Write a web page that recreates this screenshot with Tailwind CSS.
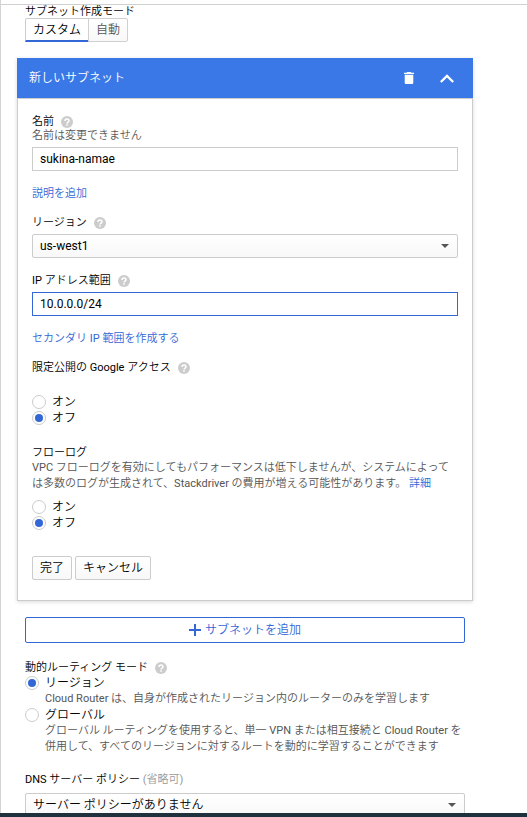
<!DOCTYPE html>
<html lang="ja">
<head>
  <meta charset="UTF-8" />
  <meta name="viewport" content="width=device-width, initial-scale=1.0" />
  <title>VPC ネットワークの作成</title>
  <script src="https://cdn.jsdelivr.net/npm/@tailwindcss/browser@4"></script>
  <style>
    body {
      font-family: Roboto, 'Noto Sans CJK JP DemiLight', 'Noto Sans CJK JP Light', 'Noto Sans CJK JP', sans-serif;
    }
  </style>
</head>
<body class="h-screen flex flex-col bg-white text-black text-[11px] leading-[14px] overflow-hidden">
<svg class="hidden">
  <symbol id="help" viewBox="0 0 12 12">
    <circle cx="6" cy="6" r="6" fill="#ccc"/>
    <path fill="none" stroke="#fff" stroke-width="1.500" d="M4 4.900C4 3.600 4.900 2.900 6 2.900s2 .7 2 1.800c0 1.300-2 1.400-2 2.900"/>
    <path fill="#fff" d="M5.200 8.300h1.600v1.500H5.200z"/>
  </symbol>
  <symbol id="arrow" viewBox="0 0 8 4">
    <path fill="#555" d="M0 0h8L4 4z"/>
  </symbol>
</svg>

<main class="flex-1 min-h-0 overflow-hidden border-l border-[#d4d4d4]">
  <div class="h-[5px] border-b border-[#d0d0d0]"></div>

  <form class="pl-6 pr-[62px]">
    <h2 class="leading-[13px]">サブネット作成モード</h2>
    <div class="flex text-xs leading-[22px]">
      <button type="button" class="h-6 px-[7px] border border-b-2 border-[#ccc] border-b-[#3367d6] rounded-tl-xs">カスタム</button>
      <button type="button" class="h-6 px-[7px] -ml-px border border-[#d0d0d0] rounded-r-xs bg-linear-to-b from-white to-[#f8f8f8] text-[#555]">自動</button>
    </div>

    <section class="-mx-2 mt-4 shadow-[0_1px_4px_rgba(0,0,0,0.15)]">
      <header class="h-10 flex items-center bg-[#3b78e7] text-white pl-3 pr-[19px]">
        <h3 class="flex-1 text-xs">新しいサブネット</h3>
        <button type="button" aria-label="削除" class="mr-[26px]">
          <svg class="w-[10px] h-3" viewBox="5 3 14 18" preserveAspectRatio="none" fill="currentColor"><path d="M6 19c0 1.100.9 2 2 2h8c1.100 0 2-.9 2-2V7H6v12zM19 4h-3.500l-1-1h-5l-1 1H5v2h14V4z"/></svg>
        </button>
        <button type="button" aria-label="折りたたむ">
          <svg class="w-[14px] h-[9px]" viewBox="6 8 12 7.410" fill="currentColor"><path d="M12 8l-6 6 1.410 1.410L12 10.830l4.590 4.580L18 14z"/></svg>
        </button>
      </header>

      <div class="border border-[#ccc] px-[14px] pt-4 pb-5">
        <div class="flex items-center gap-[7px]"><label for="name">名前</label><svg class="size-3"><use href="#help"/></svg></div>
        <p class="text-[#555]">名前は変更できません</p>
        <input id="name" type="text" value="sukina-namae" class="block w-full h-6 mt-1 px-[7px] border border-[#ccc] text-xs outline-none">

        <a href="#" class="block mt-4 text-[#3367d6]">説明を追加</a>

        <div class="flex items-center gap-[7px] mt-[15px]"><label for="region">リージョン</label><svg class="size-3"><use href="#help"/></svg></div>
        <div class="relative mt-1">
          <select id="region" class="block appearance-none w-full h-6 px-[7px] border border-[#ccc] rounded-xs bg-linear-to-b from-white to-[#f8f8f8] text-xs">
            <option>us-west1</option>
          </select>
          <svg class="absolute right-[9px] top-[10px] w-2 h-1 pointer-events-none"><use href="#arrow"/></svg>
        </div>

        <div class="flex items-center gap-[7px] mt-4"><label for="range">IP アドレス範囲</label><svg class="size-3"><use href="#help"/></svg></div>
        <input id="range" type="text" value="10.0.0.0/24" class="block w-full h-6 mt-1 px-[7px] border border-[#3367d6] text-xs outline-none">

        <a href="#" class="block mt-4 text-[#3367d6]">セカンダリ IP 範囲を作成する</a>

        <div class="flex items-center gap-[7px] mt-[15px]"><h4>限定公開の Google アクセス</h4><svg class="size-3"><use href="#help"/></svg></div>
        <div class="mt-[19px] text-xs leading-4">
          <label class="flex items-center gap-[6px]"><input type="radio" name="access" class="appearance-none size-[14px] p-[2px] rounded-full border border-[#ccc] bg-clip-content checked:bg-[#3367d6]">オン</label>
          <label class="flex items-center gap-[6px]"><input type="radio" name="access" checked class="appearance-none size-[14px] p-[2px] rounded-full border border-[#ccc] bg-clip-content checked:bg-[#3367d6]">オフ</label>
        </div>

        <h4 class="mt-[20px]">フローログ</h4>
        <p class="leading-4 text-[#555]">VPC フローログを有効にしてもパフォーマンスは低下しませんが、システムによっては多数のログが生成されて、Stackdriver の費用が増える可能性があります。 <a href="#" class="text-[#3367d6]">詳細</a></p>
        <div class="mt-[7px] text-xs leading-4">
          <label class="flex items-center gap-[6px]"><input type="radio" name="flowlog" class="appearance-none size-[14px] p-[2px] rounded-full border border-[#ccc] bg-clip-content checked:bg-[#3367d6]">オン</label>
          <label class="flex items-center gap-[6px]"><input type="radio" name="flowlog" checked class="appearance-none size-[14px] p-[2px] rounded-full border border-[#ccc] bg-clip-content checked:bg-[#3367d6]">オフ</label>
        </div>

        <div class="flex gap-[3px] mt-[25px] text-xs leading-[22px]">
          <button type="button" class="h-6 px-[7px] border border-[#ccc] rounded-xs bg-linear-to-b from-white to-[#f8f8f8]">完了</button>
          <button type="button" class="h-6 px-[7px] border border-[#ccc] rounded-xs bg-linear-to-b from-white to-[#f8f8f8]">キャンセル</button>
        </div>
      </div>
    </section>

    <button type="button" class="w-full h-[26px] mt-4 flex items-center justify-center gap-1 border border-[#3367d6] rounded-xs text-xs text-[#3367d6]">
      <svg class="size-3" viewBox="0 0 12 12" fill="currentColor"><path d="M5 0h2v5h5v2H7v5H5V7H0V5h5z"/></svg>
      サブネットを追加
    </button>

    <div class="flex items-center gap-[7px] mt-[18px]"><h2>動的ルーティング モード</h2><svg class="size-3"><use href="#help"/></svg></div>
    <label class="flex items-center gap-[6px] text-xs leading-4"><input type="radio" name="routing" checked class="appearance-none size-[14px] p-[2px] rounded-full border border-[#ccc] bg-clip-content checked:bg-[#3367d6]">リージョン</label>
    <p class="pl-5 leading-4 text-[#555]">Cloud Router は、自身が作成されたリージョン内のルーターのみを学習します</p>
    <label class="flex items-center gap-[6px] text-xs leading-4"><input type="radio" name="routing" class="appearance-none size-[14px] p-[2px] rounded-full border border-[#ccc] bg-clip-content checked:bg-[#3367d6]">グローバル</label>
    <p class="pl-5 leading-4 text-[#555]">グローバル ルーティングを使用すると、単一 VPN または相互接続と Cloud Router を併用して、すべてのリージョンに対するルートを動的に学習することができます</p>

    <label for="dns" class="block mt-[18px]">DNS サーバー ポリシー <span class="text-[#999]">(省略可)</span></label>
    <div class="relative mt-[6px]">
      <select id="dns" class="block appearance-none w-full h-6 px-[7px] border border-[#ccc] rounded-xs bg-linear-to-b from-white to-[#f8f8f8] text-xs">
        <option>サーバー ポリシーがありません</option>
      </select>
      <svg class="absolute right-[9px] top-[10px] w-2 h-1 pointer-events-none"><use href="#arrow"/></svg>
    </div>
  </form>
</main>
<footer class="h-1 bg-[#20313e]"></footer>
</body>
</html>
